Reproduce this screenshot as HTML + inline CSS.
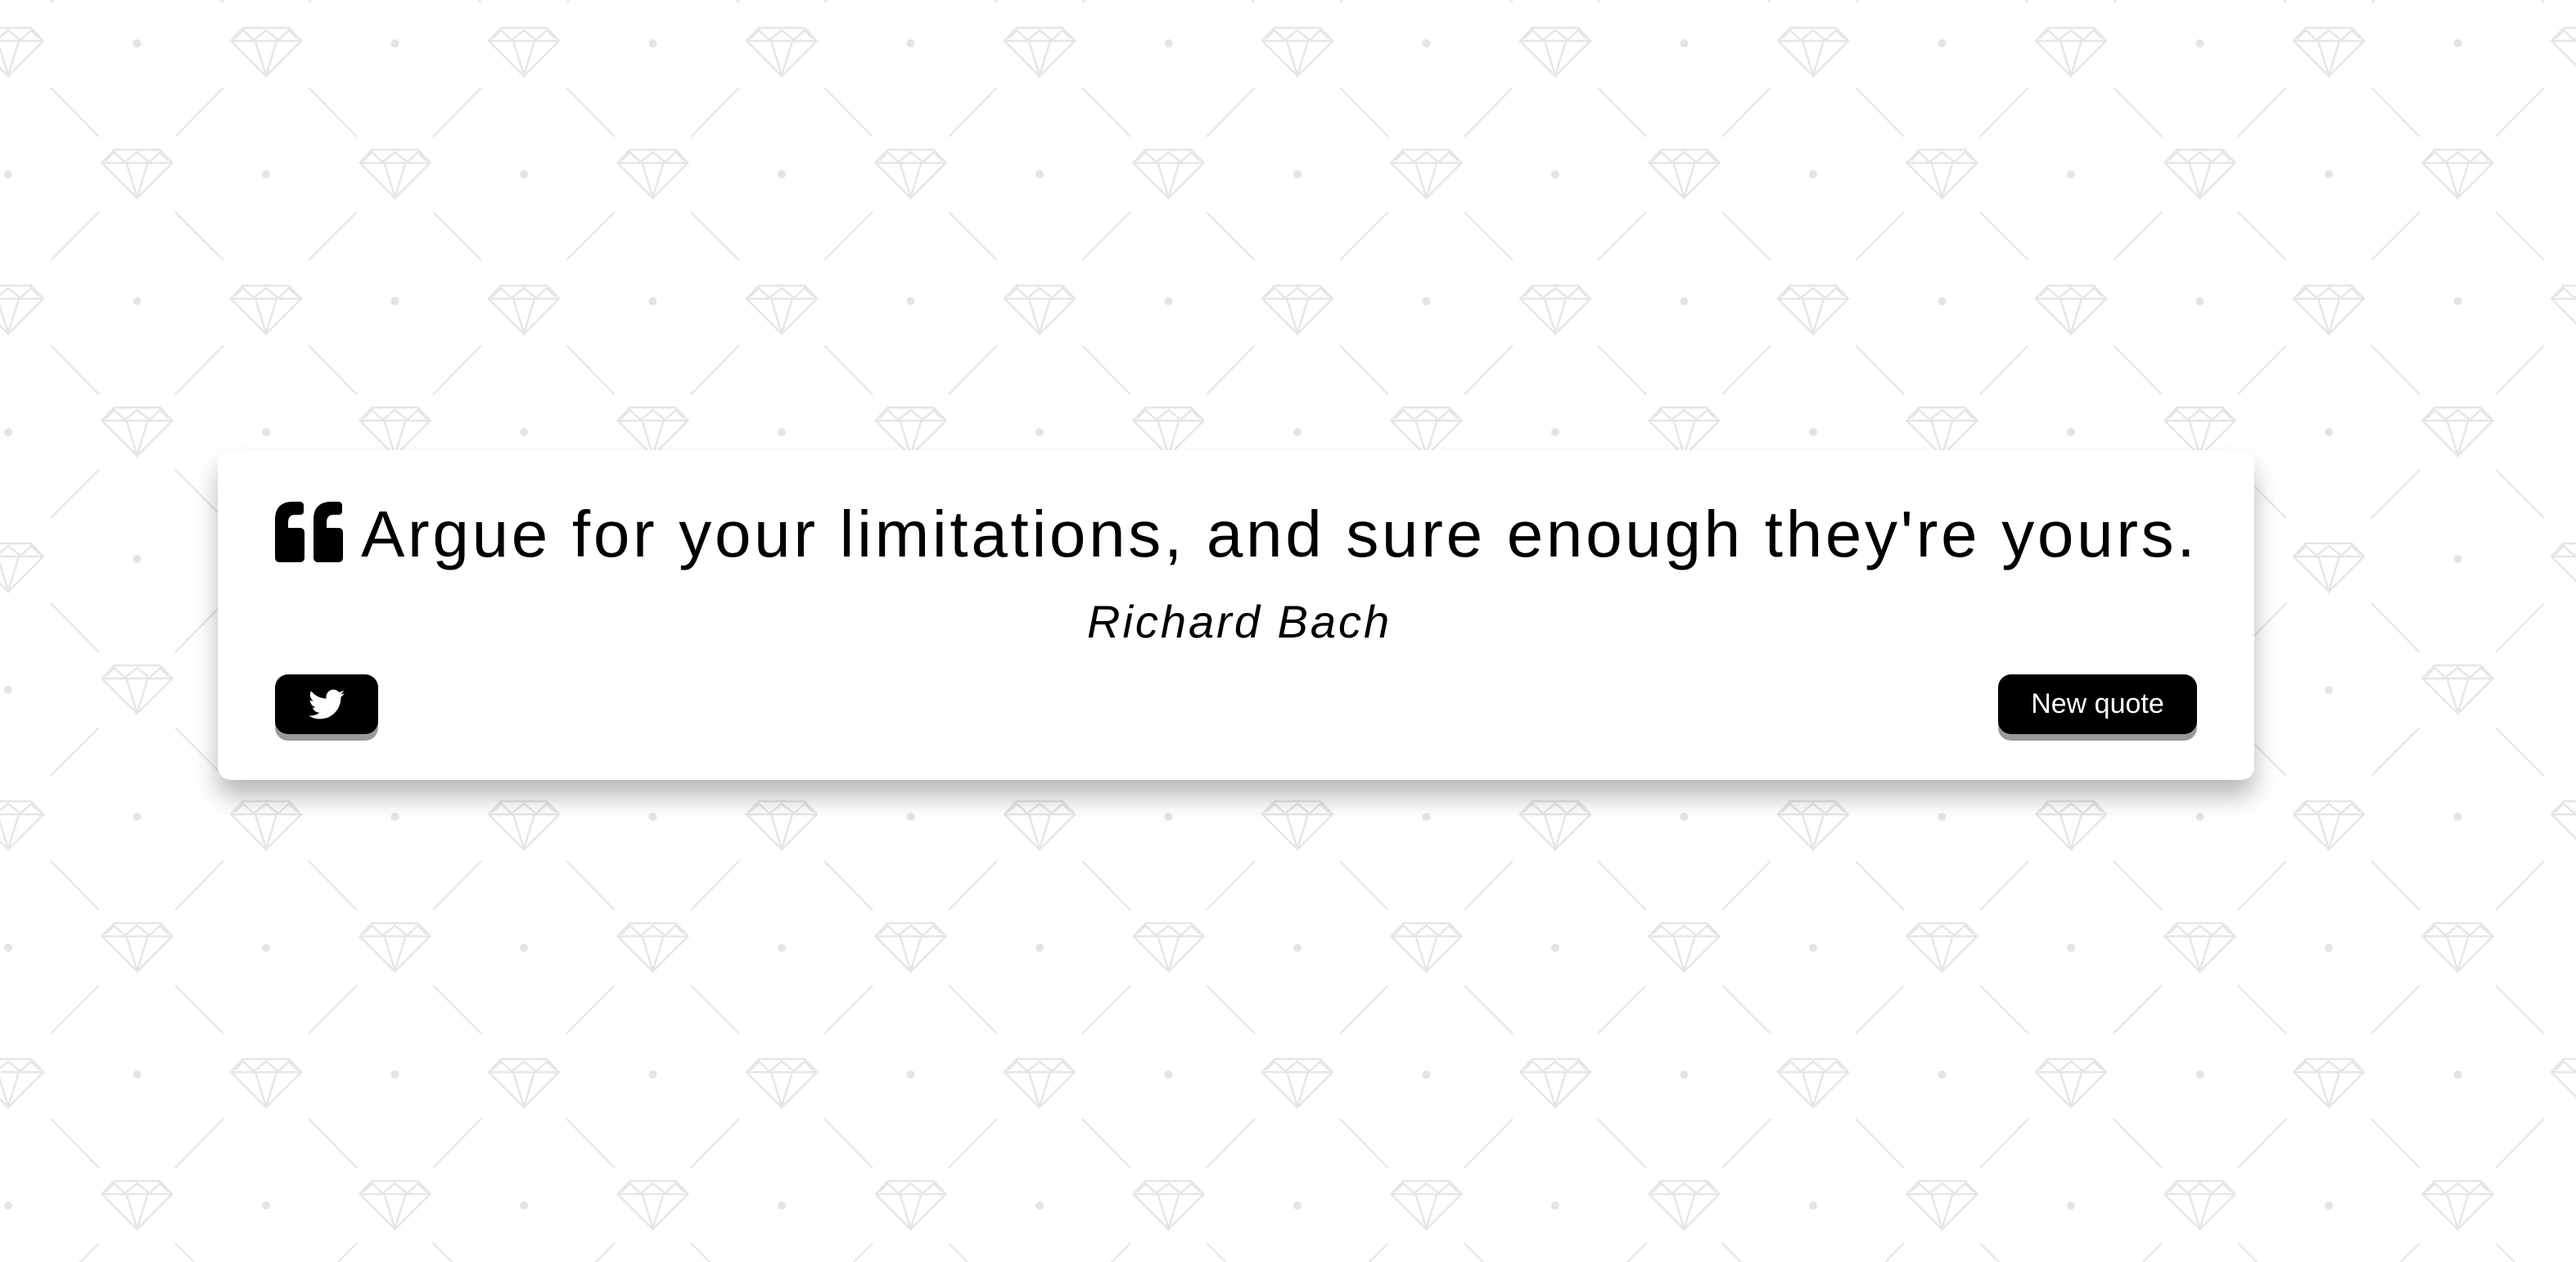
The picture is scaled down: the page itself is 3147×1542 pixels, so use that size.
<!DOCTYPE html>
<html><head><meta charset="utf-8"><style>
html,body{margin:0;padding:0;width:3147px;height:1542px;overflow:hidden;background:#fff;}
#bg{position:absolute;left:0;top:0;}
.card{position:absolute;left:266px;top:550px;width:2488px;height:403px;background:#fff;border-radius:16px;box-shadow:0 20px 30px rgba(0,0,0,0.28);}
.q{position:absolute;left:441px;top:603px;font-family:"Liberation Sans",sans-serif;font-size:80px;letter-spacing:3.7px;line-height:100px;color:#000;white-space:nowrap;}
.qi{position:absolute;left:336px;top:613px;}
.a{position:absolute;left:1328px;top:725px;font-family:"Liberation Sans",sans-serif;font-style:italic;font-size:56px;letter-spacing:3px;line-height:70px;color:#000;white-space:nowrap;}
.btn{position:absolute;background:#000;border-radius:16px;box-shadow:0 8px 0 #999;color:#fff;font-family:"Liberation Sans",sans-serif;display:flex;align-items:center;justify-content:center;}
</style></head><body>
<svg id="bg" width="3147" height="1542">
<defs>
<g id="d" fill="none" stroke="#e6e6e6" stroke-width="2.5">
<polygon points="-28,0 28,0 43,16 0,59 -43,16"/>
<line x1="-43" y1="16" x2="43" y2="16"/>
<polyline points="-38,13 -28,3 -15,15 0,3 15,15 28,3 38,13"/>
<polyline points="-13,16 0,58 13,16"/>
</g>
<pattern id="p" patternUnits="userSpaceOnUse" x="10" y="0" width="315" height="315">
<use href="#d" x="0" y="34"/><use href="#d" x="315" y="34"/>
<use href="#d" x="0" y="349"/><use href="#d" x="315" y="349"/>
<use href="#d" x="157.5" y="183"/><use href="#d" x="157.5" y="-132"/>
<g fill="#e4e4e4"><circle cx="157.5" cy="53" r="5"/><circle cx="0" cy="213" r="5"/><circle cx="315" cy="213" r="5"/></g>
<g stroke="#e6e6e6" stroke-width="2.2">
<line x1="52" y1="107" x2="111" y2="167"/><line x1="204" y1="167" x2="263" y2="107"/>
<line x1="52" y1="318" x2="111" y2="259"/><line x1="204" y1="259" x2="263" y2="318"/>
<line x1="52" y1="3" x2="111" y2="-56"/><line x1="204" y1="-56" x2="263" y2="3"/>
</g>
</pattern>
</defs>
<rect width="3147" height="1542" fill="url(#p)"/>
</svg>
<div class="card"></div>
<svg class="qi" width="84" height="74" viewBox="0 0 84 74">
<path d="M6 74 Q0 74 0 68 L0 22 Q0 0 22 0 L30 0 Q35 0 35 5 L35 12 Q35 16 30 16 L24 16 Q16 16 16 26 L16 32 L30 32 Q36 32 36 38 L36 68 Q36 74 30 74 Z" fill="#000"/>
<path d="M53 74 Q47 74 47 68 L47 22 Q47 0 69 0 L77 0 Q82 0 82 5 L82 12 Q82 16 77 16 L71 16 Q63 16 63 26 L63 32 L77 32 Q83 32 83 38 L83 68 Q83 74 77 74 Z" fill="#000"/>
</svg>
<div class="q">Argue for your limitations, and sure enough they're yours.</div>
<div class="a">Richard Bach</div>
<div class="btn" style="left:336px;top:824px;width:126px;height:73px;">
<svg width="44" height="38" viewBox="0 0 24 20"><path fill="#fff" d="M24 2.4c-.9.4-1.8.6-2.8.8 1-.6 1.8-1.6 2.2-2.7-1 .6-2 1-3.1 1.2C19.3.7 18 0 16.6 0c-2.7 0-4.9 2.2-4.9 4.9 0 .4 0 .8.1 1.1C7.7 5.8 4.1 3.9 1.7.9c-.4.7-.7 1.6-.7 2.5 0 1.7.9 3.2 2.2 4.1-.8 0-1.6-.2-2.200-.6v.1c0 2.4 1.7 4.4 3.9 4.8-.4.1-.8.2-1.3.2-.3 0-.6 0-.9-.1.6 2 2.4 3.4 4.6 3.4-1.7 1.3-3.8 2.1-6.1 2.1-.4 0-.8 0-1.2-.1 2.2 1.4 4.8 2.2 7.5 2.2 9.1 0 14-7.5 14-14v-.6c1-.7 1.8-1.600 2.5-2.5z"/></svg>
</div>
<div class="btn" style="left:2441px;top:824px;width:243px;height:73px;font-size:34px;">New quote</div>
</body></html>
